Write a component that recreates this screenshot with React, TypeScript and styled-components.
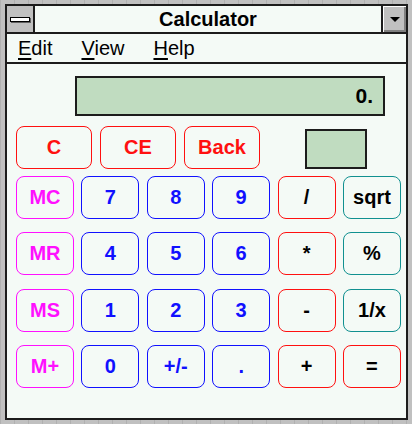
import * as React from "react";
import styled, { createGlobalStyle } from "styled-components";

const GlobalStyle = createGlobalStyle`
  html, body {
    margin: 0;
    padding: 0;
    background: #c0c0c0;
  }
  body {
    width: 412px;
    height: 424px;
    overflow: hidden;
    font-family: "Liberation Sans", Arial, sans-serif;
  }
`;

const Desktop = styled.div`
  width: 412px;
  height: 424px;
  padding: 4px 4px 0 5px;
  box-sizing: border-box;
  background-color: #c0c0c0;
  background-image: repeating-linear-gradient(
    90deg,
    #b0b0b0 0 1px,
    transparent 1px 14px
  );
`;

const Window = styled.div`
  width: 403px;
  height: 416px;
  box-sizing: border-box;
  border: 2px solid #1c1c1c;
  background: #f4faf6;
  display: flex;
  flex-direction: column;
`;

const TitleBar = styled.div`
  height: 28px;
  box-sizing: border-box;
  border-bottom: 2px solid #1c1c1c;
  display: flex;
  align-items: stretch;
`;

const SysBox = styled.div`
  width: 28px;
  box-sizing: border-box;
  border-right: 2px solid #1c1c1c;
  background: #c0c0c0;
  display: flex;
  align-items: center;
  justify-content: center;
`;

const SysBar = styled.span`
  width: 18px;
  height: 3px;
  background: #ffffff;
  border: 1px solid #000;
  box-shadow: 1px 1px 0 #606060;
`;

const Title = styled.div`
  flex: 1;
  display: flex;
  align-items: center;
  justify-content: center;
  font-weight: bold;
  font-size: 20px;
  color: #000;
`;

const DropBox = styled.div`
  width: 25px;
  box-sizing: border-box;
  border-left: 2px solid #1c1c1c;
  background: #c0c0c0;
  box-shadow: inset 1px 1px 0 #ffffff, inset -2px -2px 0 #808080;
  display: flex;
  align-items: center;
  justify-content: center;
`;

const Arrow = styled.span`
  width: 0;
  height: 0;
  border-left: 5px solid transparent;
  border-right: 5px solid transparent;
  border-top: 5px solid #000;
`;

const MenuBar = styled.div`
  height: 30px;
  box-sizing: border-box;
  border-bottom: 2px solid #1c1c1c;
  display: flex;
  align-items: center;
  gap: 29px;
  padding-left: 11px;
  font-size: 20px;
  color: #000;
`;

const MenuItem = styled.span`
  line-height: 1;
  u {
    text-decoration-thickness: 2px;
    text-underline-offset: 3px;
  }
`;

const Client = styled.div`
  flex: 1;
  padding: 12px 0 0 9px;
  display: flex;
  flex-direction: column;
`;

const Display = styled.div`
  margin-left: 59px;
  width: 310px;
  height: 40px;
  box-sizing: border-box;
  border: 2px solid #1c1c1c;
  background: #c0dcc0;
  display: flex;
  align-items: center;
  justify-content: flex-end;
  padding-right: 10px;
  font-size: 21px;
  font-weight: bold;
  color: #000;
`;

const TopRow = styled.div`
  margin-top: 10px;
  display: flex;
  align-items: flex-end;
  gap: 8px;
`;

const MemoryBox = styled.div`
  margin-left: 37px;
  width: 62px;
  height: 40px;
  box-sizing: border-box;
  border: 2px solid #1c1c1c;
  background: #c0dcc0;
`;

const Keypad = styled.div`
  margin-top: 7px;
  display: grid;
  grid-template-columns: repeat(6, 58px);
  grid-auto-rows: 43px;
  column-gap: 7.4px;
  row-gap: 13.3px;
`;

const Key = styled.button<{ $edge: string; $ink: string; $wide?: boolean }>`
  width: ${(p) => (p.$wide ? "76px" : "58px")};
  height: 43px;
  box-sizing: border-box;
  border: 1.5px solid ${(p) => p.$edge};
  border-radius: 8px;
  background: transparent;
  color: ${(p) => p.$ink};
  font-family: "Liberation Sans", Arial, sans-serif;
  font-weight: bold;
  font-size: 20px;
  padding: 0;
  display: flex;
  align-items: center;
  justify-content: center;
`;

const RED = "#ff1010";
const BLUE = "#1010ff";
const PINK = "#ff10ff";
const TEAL = "#109090";
const BLACK = "#000000";

type KeyDef = { label: string; edge: string; ink: string };

const keys: KeyDef[] = [
  { label: "MC", edge: PINK, ink: PINK },
  { label: "7", edge: BLUE, ink: BLUE },
  { label: "8", edge: BLUE, ink: BLUE },
  { label: "9", edge: BLUE, ink: BLUE },
  { label: "/", edge: RED, ink: BLACK },
  { label: "sqrt", edge: TEAL, ink: BLACK },
  { label: "MR", edge: PINK, ink: PINK },
  { label: "4", edge: BLUE, ink: BLUE },
  { label: "5", edge: BLUE, ink: BLUE },
  { label: "6", edge: BLUE, ink: BLUE },
  { label: "*", edge: RED, ink: BLACK },
  { label: "%", edge: TEAL, ink: BLACK },
  { label: "MS", edge: PINK, ink: PINK },
  { label: "1", edge: BLUE, ink: BLUE },
  { label: "2", edge: BLUE, ink: BLUE },
  { label: "3", edge: BLUE, ink: BLUE },
  { label: "-", edge: RED, ink: BLACK },
  { label: "1/x", edge: TEAL, ink: BLACK },
  { label: "M+", edge: PINK, ink: PINK },
  { label: "0", edge: BLUE, ink: BLUE },
  { label: "+/-", edge: BLUE, ink: BLUE },
  { label: ".", edge: BLUE, ink: BLUE },
  { label: "+", edge: RED, ink: BLACK },
  { label: "=", edge: RED, ink: BLACK },
];

export default function App() {
  return (
    <>
      <GlobalStyle />
      <Desktop>
        <Window>
          <TitleBar>
            <SysBox>
              <SysBar />
            </SysBox>
            <Title>Calculator</Title>
            <DropBox>
              <Arrow />
            </DropBox>
          </TitleBar>
          <MenuBar>
            <MenuItem>
              <u>E</u>dit
            </MenuItem>
            <MenuItem>
              <u>V</u>iew
            </MenuItem>
            <MenuItem>
              <u>H</u>elp
            </MenuItem>
          </MenuBar>
          <Client>
            <Display>0.</Display>
            <TopRow>
              <Key $edge={RED} $ink={RED} $wide>
                C
              </Key>
              <Key $edge={RED} $ink={RED} $wide>
                CE
              </Key>
              <Key $edge={RED} $ink={RED} $wide>
                Back
              </Key>
              <MemoryBox />
            </TopRow>
            <Keypad>
              {keys.map((k, i) => (
                <Key key={i} $edge={k.edge} $ink={k.ink}>
                  {k.label}
                </Key>
              ))}
            </Keypad>
          </Client>
        </Window>
      </Desktop>
    </>
  );
}
